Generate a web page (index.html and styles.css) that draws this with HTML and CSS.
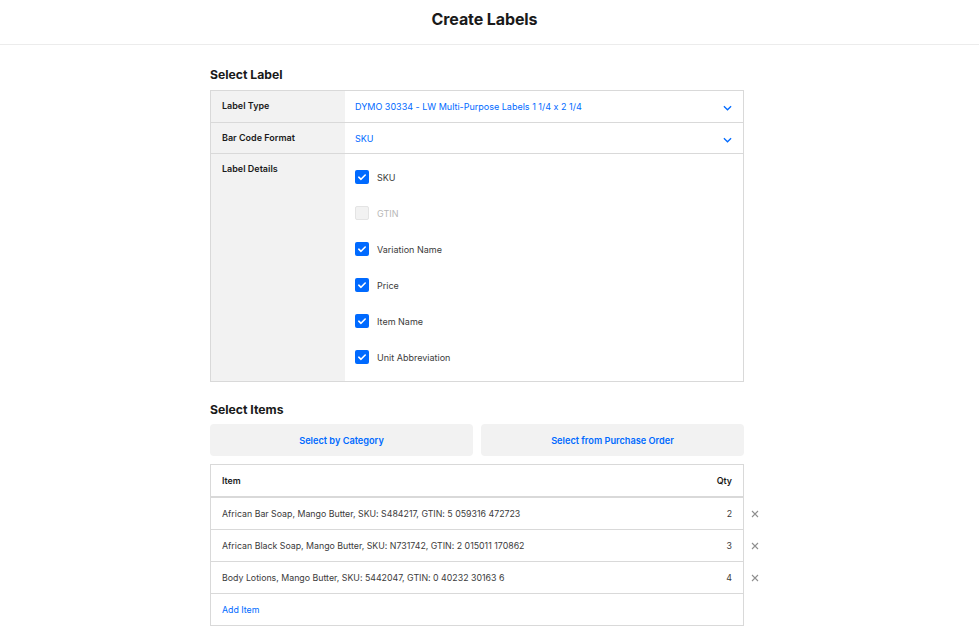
FILE: index.html
```html
<!DOCTYPE html>
<html>
<head>
<meta charset="utf-8">
<link rel="stylesheet" href="styles.css">
</head>
<body>
<header class="topbar"><h1 class="title">Create Labels</h1></header>
<div class="page">
<main class="content">
  <h2 class="section-title">Select Label</h2>
  <div class="form-table">
    <div class="form-row">
      <div class="form-label">Label Type</div>
      <div class="form-value select"><span>DYMO 30334 - LW Multi-Purpose Labels 1 1/4 x 2 1/4</span><svg class="chev" viewBox="0 0 10 6" width="9" height="6"><path d="M1 1l4 4 4-4" fill="none" stroke="#006aff" stroke-width="1.4"/></svg></div>
    </div>
    <div class="form-row">
      <div class="form-label">Bar Code Format</div>
      <div class="form-value select"><span>SKU</span><svg class="chev" viewBox="0 0 10 6" width="9" height="6"><path d="M1 1l4 4 4-4" fill="none" stroke="#006aff" stroke-width="1.4"/></svg></div>
    </div>
    <div class="form-row details">
      <div class="form-label">Label Details</div>
      <div class="form-value checks">
        <label class="check"><span class="box on"><svg viewBox="0 0 14 14" width="14" height="14"><path d="M3.8 7.2l2.2 2.1 4.2-4.3" fill="none" stroke="#fff" stroke-width="1.6" stroke-linecap="round" stroke-linejoin="round"/></svg></span>SKU</label>
        <label class="check disabled"><span class="box off"></span>GTIN</label>
        <label class="check"><span class="box on"><svg viewBox="0 0 14 14" width="14" height="14"><path d="M3.8 7.2l2.2 2.1 4.2-4.3" fill="none" stroke="#fff" stroke-width="1.6" stroke-linecap="round" stroke-linejoin="round"/></svg></span>Variation Name</label>
        <label class="check"><span class="box on"><svg viewBox="0 0 14 14" width="14" height="14"><path d="M3.8 7.2l2.2 2.1 4.2-4.3" fill="none" stroke="#fff" stroke-width="1.6" stroke-linecap="round" stroke-linejoin="round"/></svg></span>Price</label>
        <label class="check"><span class="box on"><svg viewBox="0 0 14 14" width="14" height="14"><path d="M3.8 7.2l2.2 2.1 4.2-4.3" fill="none" stroke="#fff" stroke-width="1.6" stroke-linecap="round" stroke-linejoin="round"/></svg></span>Item Name</label>
        <label class="check"><span class="box on"><svg viewBox="0 0 14 14" width="14" height="14"><path d="M3.8 7.2l2.2 2.1 4.2-4.3" fill="none" stroke="#fff" stroke-width="1.6" stroke-linecap="round" stroke-linejoin="round"/></svg></span>Unit Abbreviation</label>
      </div>
    </div>
  </div>

  <h2 class="section-title items-title">Select Items</h2>
  <div class="btn-row">
    <button class="btn">Select by Category</button>
    <button class="btn">Select from Purchase Order</button>
  </div>

  <div class="items">
    <div class="item-row head"><span class="item-name">Item</span><span class="qty">Qty</span></div>
    <div class="item-row"><span class="item-name">African Bar Soap, Mango Butter, SKU: S484217, GTIN: 5 059316 472723</span><span class="qty">2</span><svg class="remove" viewBox="0 0 8 8" width="8" height="8"><path d="M1 1l6 6M7 1l-6 6" stroke="#8f8f8f" stroke-width="1.1"/></svg></div>
    <div class="item-row"><span class="item-name">African Black Soap, Mango Butter, SKU: N731742, GTIN: 2 015011 170862</span><span class="qty">3</span><svg class="remove" viewBox="0 0 8 8" width="8" height="8"><path d="M1 1l6 6M7 1l-6 6" stroke="#8f8f8f" stroke-width="1.1"/></svg></div>
    <div class="item-row"><span class="item-name">Body Lotions, Mango Butter, SKU: 5442047, GTIN: 0 40232 30163 6</span><span class="qty">4</span><svg class="remove" viewBox="0 0 8 8" width="8" height="8"><path d="M1 1l6 6M7 1l-6 6" stroke="#8f8f8f" stroke-width="1.1"/></svg></div>
    <div class="item-row"><a class="add">Add Item</a></div>
  </div>
</main>
</div>
</body>
</html>
```
FILE: styles.css
```css
* { box-sizing: border-box; }
body {
  margin: 0;
  font-family: Inter, "Noto Sans", sans-serif;
  font-feature-settings: "calt" 0;
  color: #1a1a1a;
  background: #fff;
}
.topbar {
  height: 45px;
  border-bottom: 1px solid #ececec;
  display: flex;
  align-items: center;
  justify-content: center;
  padding-right: 10px;
}
.title {
  margin: 0;
  font-size: 16px;
  font-weight: 700;
  padding-bottom: 6px;
  letter-spacing: -0.1px;
}
.page {
  padding-right: 25px;
}
.content {
  width: 534px;
  margin: 0 auto;
  padding-top: 22px;
}
.section-title {
  margin: 0 0 8px 0;
  font-size: 12.2px;
  font-weight: 700;
  line-height: 15px;
}
.items-title { margin-top: 20px; margin-bottom: 7px; }
.form-table {
  border: 1px solid #d9d9d9;
}
.form-row {
  display: flex;
  border-top: 1px solid #d9d9d9;
  min-height: 31px;
}
.form-row:first-child { border-top: none; }
.form-label {
  width: 134px;
  background: #f2f2f2;
  font-size: 9px;
  font-weight: 600;
  padding: 8px 11px;
  line-height: 13px;
}
.form-value {
  flex: 1;
  font-size: 9px;
  line-height: 13px;
  padding: 8px 10px;
}
.select {
  display: flex;
  justify-content: space-between;
  align-items: center;
  color: #006aff;
}
.chev { margin-right: 1px; margin-top: 3px; }
.checks {
  display: flex;
  flex-direction: column;
  gap: 22px;
  padding: 16px 10px 17px 10px;
}
.check {
  display: flex;
  align-items: center;
  gap: 8px;
  height: 14px;
  color: #3b3b3b;
}
.check.disabled { color: #b8b8b8; }
.box {
  width: 14px;
  height: 14px;
  border-radius: 2px;
  display: inline-flex;
}
.box.on { background: #006aff; }
.box.off { background: #f2f2f2; border: 1px solid #e4e4e4; }
.btn-row {
  display: flex;
  gap: 8px;
  margin-bottom: 8px;
}
.btn {
  flex: 1;
  height: 32px;
  border: none;
  border-radius: 4px;
  background: #f2f2f2;
  color: #006aff;
  font-family: inherit;
  font-size: 9.2px;
  font-weight: 600;
}
.items {
  border: 1px solid #d9d9d9;
}
.item-row {
  position: relative;
  display: flex;
  justify-content: space-between;
  align-items: center;
  height: 32px;
  padding: 0 11px;
  font-size: 8.8px;
  color: #3b3b3b;
  border-top: 1px solid #d9d9d9;
}
.item-row:first-child { border-top: none; }
.item-row.head {
  height: 32px;
  border-bottom: 1px solid #d9d9d9;
  font-weight: 600;
  color: #1a1a1a;
}
.remove {
  position: absolute;
  right: -16px;
  top: 12px;
}
.add { color: #006aff; }
```
